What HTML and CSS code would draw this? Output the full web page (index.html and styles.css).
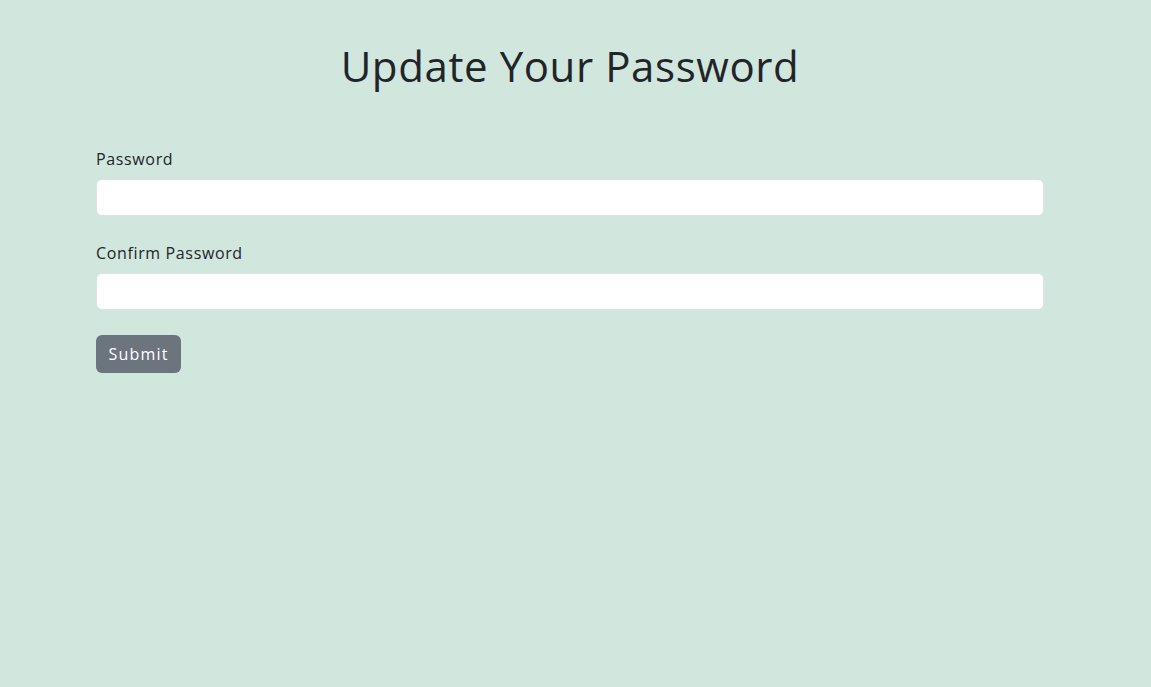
FILE: index.html
```html
<!DOCTYPE html>
<html lang="en">
<head>
<meta charset="utf-8">
<title>Update Your Password</title>
<link rel="stylesheet" href="styles.css">
</head>
<body>
<main class="page">
  <h1 class="title">Update Your Password</h1>
  <form class="form">
    <div class="field">
      <label class="label" for="pw">Password</label>
      <input class="input" id="pw" type="password">
    </div>
    <div class="field">
      <label class="label" for="pw2">Confirm Password</label>
      <input class="input" id="pw2" type="password">
    </div>
    <button class="btn" type="button">Submit</button>
  </form>
</main>
</body>
</html>
```

FILE: styles.css
```css
html, body {
  margin: 0;
  padding: 0;
  background: #d1e7dd;
  height: 100%;
}
body {
  font-family: "Open Sans", "Liberation Sans", sans-serif;
  color: #212529;
}
.page {
  width: 948px;
  margin-left: 96px;
  padding-top: 39px;
}
.title {
  margin: 0 0 54px 0;
  text-align: center;
  font-weight: 400;
  font-size: 42px;
  line-height: 54px;
  letter-spacing: 0.6px;
}
.form {
  display: flex;
  flex-direction: column;
  align-items: flex-start;
}
.field {
  width: 100%;
  display: flex;
  flex-direction: column;
  margin-bottom: 25px;
}
.label {
  font-size: 16px;
  line-height: 24px;
  margin-bottom: 8px;
  letter-spacing: 0.64px;
  color: #212529;
}
.input {
  box-sizing: border-box;
  width: 100%;
  height: 37px;
  border: 1px solid #dee2e6;
  border-radius: 6px;
  background: #fff;
  margin: 0;
}
.btn {
  margin-top: 0;
  box-sizing: border-box;
  height: 38px;
  width: 85px;
  border: none;
  border-radius: 6px;
  background: #6c757d;
  color: #fff;
  font-family: "Open Sans", "Liberation Sans", sans-serif;
  font-size: 16px;
  letter-spacing: 1.2px;
  padding: 0;
}
```
